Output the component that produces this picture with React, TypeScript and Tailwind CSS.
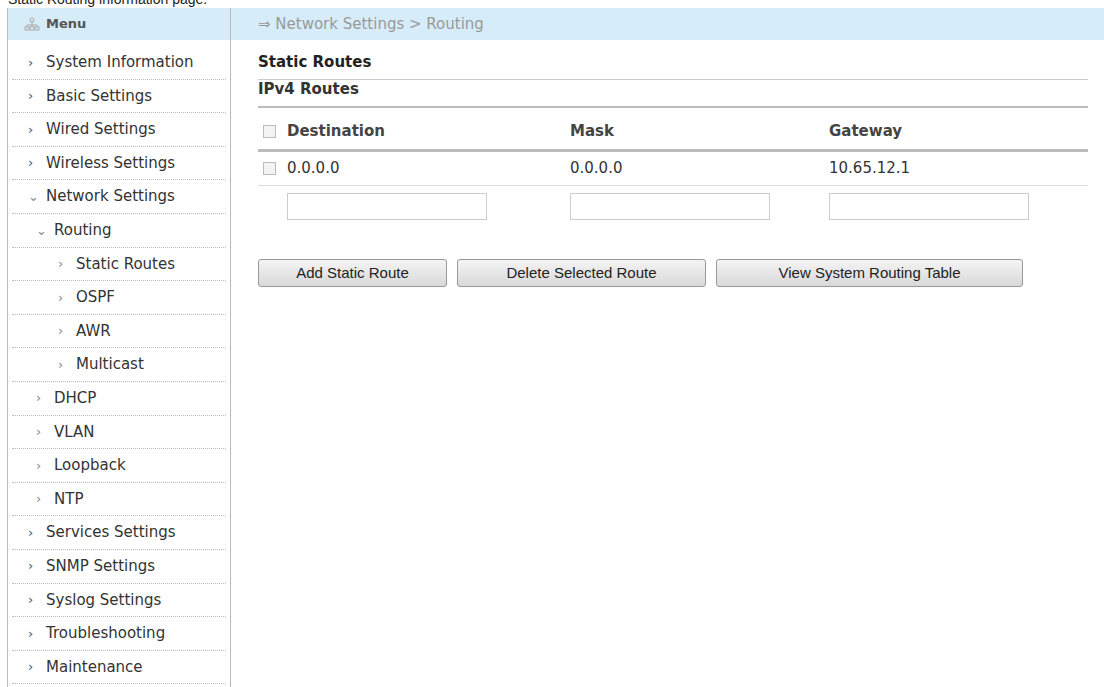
export default function App() {
  const items: [string, number, boolean?][] = [
    ["System Information", 0], ["Basic Settings", 0], ["Wired Settings", 0], ["Wireless Settings", 0],
    ["Network Settings", 0, true], ["Routing", 1, true], ["Static Routes", 2], ["OSPF", 2], ["AWR", 2],
    ["Multicast", 2], ["DHCP", 1], ["VLAN", 1], ["Loopback", 1], ["NTP", 1], ["Services Settings", 0],
    ["SNMP Settings", 0], ["Syslog Settings", 0], ["Troubleshooting", 0], ["Maintenance", 0],
  ];
  const pad = ["pl-[16px]", "pl-[24px]", "pl-[46px]"];
  return (
    <div className="w-[1104px] h-[687px] overflow-hidden bg-white text-[15px] text-[#333]" style={{ fontFamily: '"DejaVu Sans", Verdana, sans-serif' }}>
      <div className="h-[8px] overflow-hidden relative">
        <div className="absolute -top-[9px] left-[8px] text-[14px] leading-[16px] text-[#222]" style={{ fontFamily: '"Liberation Sans", Arial, sans-serif' }}>Static Routing information page.</div>
      </div>
      <div className="flex h-[679px]">
        <div className="ml-[7px] w-[224px] border-l border-r border-[#bbb] flex flex-col">
          <div className="h-[32px] bg-[#d6edf9] flex items-center pl-[16px] gap-[6px] text-[13px] font-bold text-[#555]">
            <svg width="16" height="14" viewBox="0 0 16 14" fill="none" stroke="#aaa" strokeWidth="1"><path d="M3 8 H13 M3 8 V10 M13 8 V10 M8 5 V10" /><circle cx="8" cy="3" r="2" /><rect x="1" y="10" width="4" height="3" /><rect x="6" y="10" width="4" height="3" /><rect x="11" y="10" width="4" height="3" /></svg>
            Menu
          </div>
          <div className="px-[4px] pt-[6px]">
            {items.map(([t, l, open]) => (
              <div key={t} className={`h-[33.6px] flex items-center gap-[8px] border-b border-dotted border-[#bbb] ${pad[l]}`}>
                <span className={`w-[10px] text-[13px] ${l === 0 && !open ? "text-[#2a5a8a]" : "text-[#888]"}`}>{open ? "⌄" : "›"}</span>
                <span className="text-[#333] whitespace-nowrap">{t}</span>
              </div>
            ))}
          </div>
        </div>
        <div className="flex-1 flex flex-col">
          <div className="h-[32px] bg-[#d6edf9] flex items-center pl-[27px] text-[#999] text-[15px]">⇒ Network Settings &gt; Routing</div>
          <div className="pl-[27px] pr-[16px] pt-[9px]">
            <div className="h-[31px] flex items-end pb-[6px] font-bold text-[#222] border-b border-[#ccc]">Static Routes</div>
            <div className="h-[28px] flex items-end pb-[6px] font-bold text-[#333] border-b-2 border-[#bbb]">IPv4 Routes</div>
            <div className="grid grid-cols-[29px_283px_259px_1fr] items-center h-[44px] border-b-[3px] border-[#bbb] pt-[6px] font-bold text-[#444]">
              <span className="w-[13px] h-[13px] border border-[#bbb] bg-[#f3f3f3] ml-[5px]" />
              <span>Destination</span><span>Mask</span><span>Gateway</span>
            </div>
            <div className="grid grid-cols-[29px_283px_259px_1fr] items-center h-[34px] border-b border-[#ddd] text-[#333]">
              <span className="w-[13px] h-[13px] border border-[#bbb] bg-[#f3f3f3] ml-[5px]" />
              <span>0.0.0.0</span><span>0.0.0.0</span><span>10.65.12.1</span>
            </div>
            <div className="grid grid-cols-[29px_283px_259px_1fr] items-center h-[40px]">
              <span /><div className="w-[200px] h-[27px] border border-[#ccc]" /><div className="w-[200px] h-[27px] border border-[#ccc]" /><div className="w-[200px] h-[27px] border border-[#ccc]" />
            </div>
            <div className="flex gap-[10px] mt-[33px] text-[15px] text-[#222]" style={{ fontFamily: '"Liberation Sans", Arial, sans-serif' }}>
              {[["Add Static Route", "w-[189px]"], ["Delete Selected Route", "w-[249px]"], ["View System Routing Table", "w-[307px]"]].map(([t, w]) => (
                <div key={t} className={`${w} h-[28px] flex items-center justify-center border border-[#999] rounded-[3px] bg-gradient-to-b from-[#f4f4f4] to-[#d9d9d9]`}>{t}</div>
              ))}
            </div>
          </div>
        </div>
      </div>
    </div>
  );
}
